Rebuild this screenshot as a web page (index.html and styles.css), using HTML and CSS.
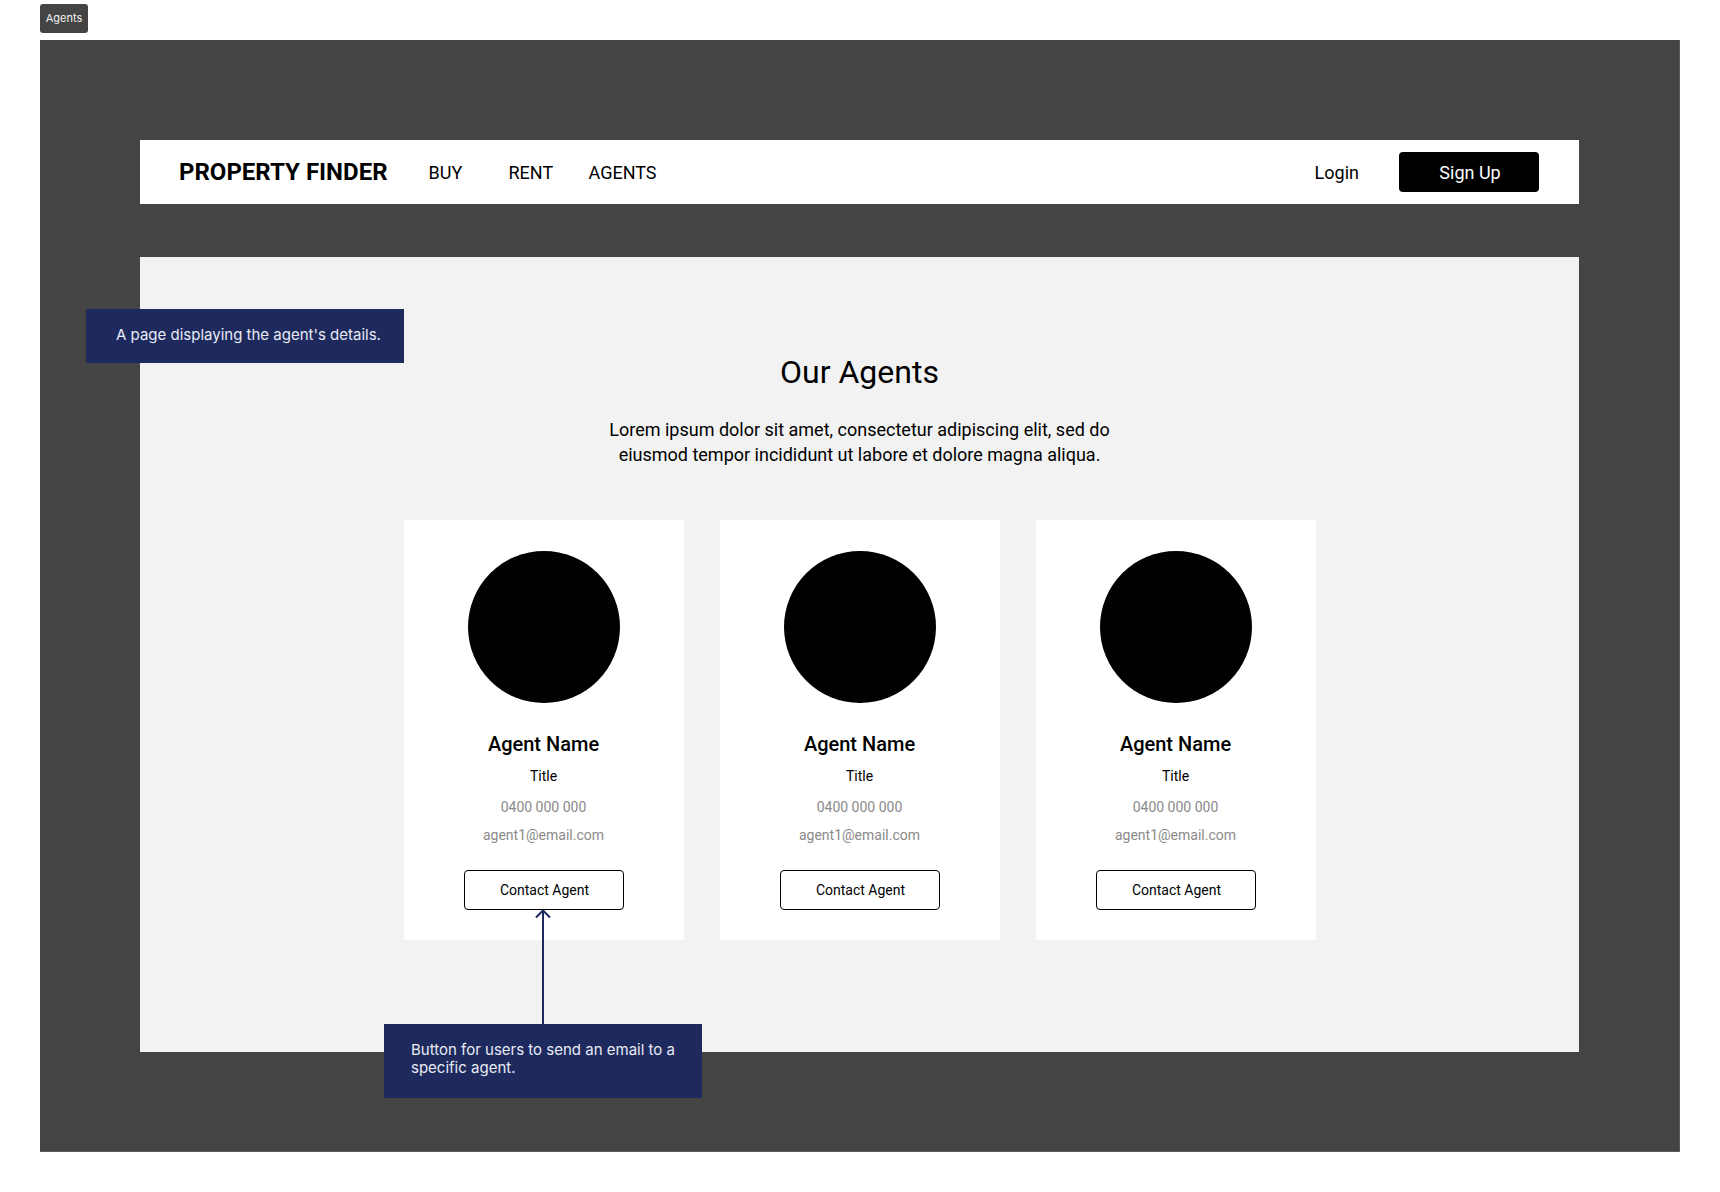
FILE: index.html
```html
<!DOCTYPE html>
<html>
<head>
<meta charset="utf-8">
<link rel="stylesheet" href="styles.css">
</head>
<body>
<div class="tag">Agents</div>
<div class="frame">
  <header class="nav">
    <div class="logo">PROPERTY FINDER</div>
    <nav class="links">
      <a class="link">BUY</a>
      <a class="link">RENT</a>
      <a class="link">AGENTS</a>
    </nav>
    <div class="spacer"></div>
    <a class="login">Login</a>
    <button class="signup">Sign Up</button>
  </header>
  <main class="content">
    <h1 class="title">Our Agents</h1>
    <p class="lead">Lorem ipsum dolor sit amet, consectetur adipiscing elit, sed do eiusmod tempor incididunt ut labore et dolore magna aliqua.</p>
    <div class="cards">
      <div class="card">
        <div class="avatar"></div>
        <div class="name">Agent Name</div>
        <div class="role">Title</div>
        <div class="phone">0400 000 000</div>
        <div class="email">agent1@email.com</div>
        <button class="contact">Contact Agent</button>
      </div>
      <div class="card">
        <div class="avatar"></div>
        <div class="name">Agent Name</div>
        <div class="role">Title</div>
        <div class="phone">0400 000 000</div>
        <div class="email">agent1@email.com</div>
        <button class="contact">Contact Agent</button>
      </div>
      <div class="card">
        <div class="avatar"></div>
        <div class="name">Agent Name</div>
        <div class="role">Title</div>
        <div class="phone">0400 000 000</div>
        <div class="email">agent1@email.com</div>
        <button class="contact">Contact Agent</button>
      </div>
    </div>
  </main>
  <div class="note note-page">A page displaying the agent's details.</div>
  <svg class="arrow" width="16" height="116" viewBox="0 0 16 116">
    <line x1="8" y1="1.5" x2="8" y2="116" stroke="#1e2a5e" stroke-width="2"/>
    <polyline points="1,8.5 8,1.5 15,8.5" fill="none" stroke="#1e2a5e" stroke-width="2"/>
  </svg>
  <div class="note note-button">Button for users to send an email to a specific agent.</div>
</div>
</body>
</html>
```

FILE: styles.css
```css
* { box-sizing: border-box; }

body {
  margin: 0;
  background: #ffffff;
  font-family: Roboto, "Liberation Sans", sans-serif;
  color: #000;
}

.tag {
  position: absolute;
  top: 4px;
  left: 40px;
  width: 48px;
  height: 29px;
  background: #444444;
  border-radius: 3px;
  color: #f0f0f0;
  font-family: Inter, "Noto Sans", sans-serif;
  font-size: 11px;
  line-height: 29px;
  text-align: center;
}

.frame {
  position: relative;
  margin: 40px 0 0 40px;
  width: 1640px;
  height: 1112px;
  padding: 100px;
  background: #444444;
  border-right: 1px solid #5a5a5a;
  border-bottom: 1px solid #5a5a5a;
}

.nav {
  display: flex;
  align-items: center;
  height: 64px;
  background: #ffffff;
  padding: 0 40px 0 39px;
}

.logo {
  font-size: 24px;
  font-weight: 700;
}

.links {
  display: flex;
  margin-left: 41px;
}

.link {
  width: 80px;
  font-size: 18px;
  color: #000;
}

.spacer { flex: 1; }

.login {
  font-size: 18px;
  color: #000;
  margin-right: 40px;
}

.signup {
  width: 140px;
  height: 40px;
  border: none;
  border-radius: 4px;
  background: #000;
  color: #fff;
  font-family: Roboto, "Liberation Sans", sans-serif;
  font-size: 18px;
  padding: 0 0 0 2px;
}

.content {
  margin-top: 53px;
  height: 795px;
  background: #f2f2f2;
  display: flex;
  flex-direction: column;
  align-items: center;
  padding-top: 96px;
}

.title {
  margin: 0;
  font-size: 32px;
  line-height: 38px;
  font-weight: 400;
}

.lead {
  margin: 26px 0 0;
  width: 520px;
  text-align: center;
  font-size: 18px;
  line-height: 25px;
}

.cards {
  display: flex;
  gap: 36px;
  margin-top: 53px;
}

.card {
  width: 280px;
  height: 420px;
  background: #ffffff;
  display: flex;
  flex-direction: column;
  align-items: center;
  padding-top: 31px;
}

.avatar {
  width: 152px;
  height: 152px;
  border-radius: 50%;
  background: #000;
}

.name {
  margin-top: 29px;
  font-size: 20px;
  line-height: 24px;
  font-weight: 500;
}

.role {
  margin-top: 10px;
  font-size: 14px;
  line-height: 20px;
}

.phone {
  margin-top: 11px;
  font-size: 14px;
  line-height: 20px;
  color: #8a8a8a;
}

.email {
  margin-top: 8px;
  font-size: 14px;
  line-height: 20px;
  color: #8a8a8a;
}

.contact {
  margin-top: 25px;
  width: 160px;
  height: 40px;
  background: #fff;
  border: 1px solid #000;
  border-radius: 4px;
  font-family: Roboto, "Liberation Sans", sans-serif;
  font-size: 14px;
  color: #000;
  padding: 0 0 0 2px;
}

.note {
  position: absolute;
  background: #1e2a5e;
  color: #e8eaf4;
  font-family: Inter, "Noto Sans", sans-serif;
  font-size: 15px;
  line-height: 18px;
}

.note-page {
  left: 46px;
  top: 269px;
  width: 318px;
  height: 54px;
  padding: 17px 0 0 30px;
}

.note-button {
  left: 344px;
  top: 984px;
  width: 318px;
  height: 74px;
  padding: 17px 20px 0 27px;
}

.arrow {
  position: absolute;
  left: 495px;
  top: 869px;
  display: block;
}
```
